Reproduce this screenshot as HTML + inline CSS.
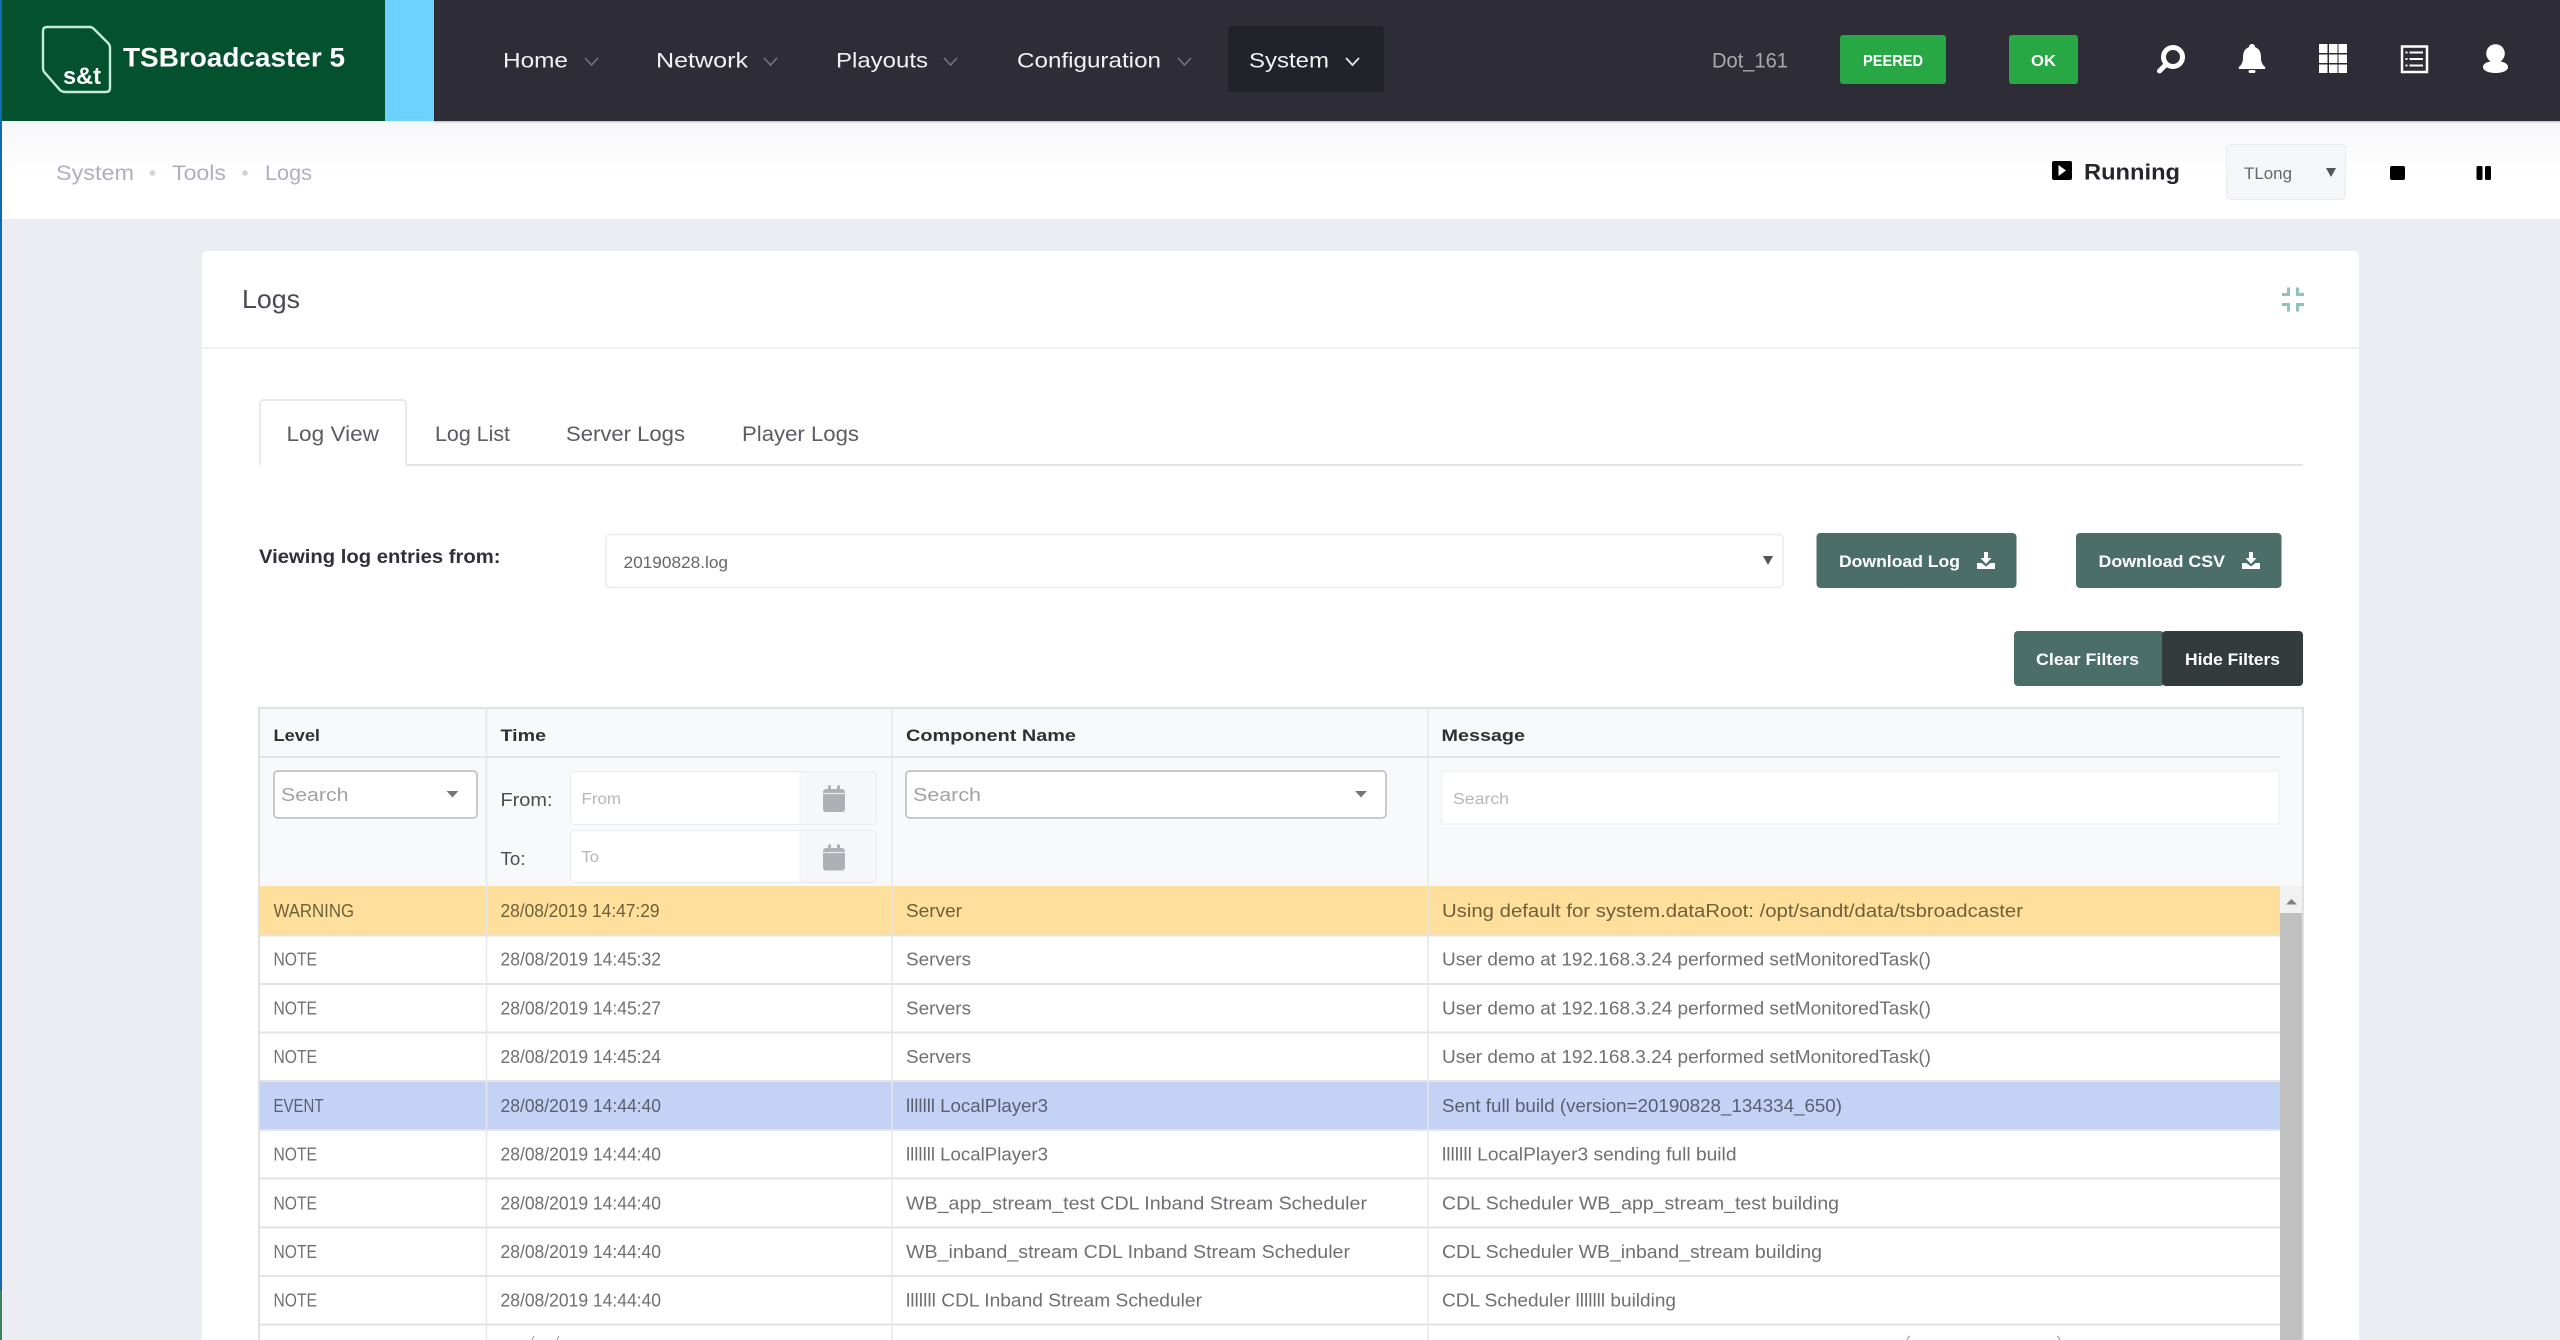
<!DOCTYPE html>
<html lang="en"><head><meta charset="utf-8"><title>Logs</title>
<style>
html,body{margin:0;padding:0;width:2560px;height:1340px;overflow:hidden;background:#ecedf3}
svg{display:block;position:absolute;left:0;top:0}
text{font-family:"Liberation Sans",sans-serif;white-space:pre}
.n{font-size:21px;fill:#f1f1f3}
.b{font-size:21px;fill:#b1afbc}
.t{font-size:21px;fill:#5b5b63}
.k{font-size:17px;font-weight:700;fill:#fff}
.h{font-size:17px;font-weight:700;fill:#2f3036}
.r{font-size:18px;fill:#707074}
.w{font-size:18px;fill:#6f6037}
.e{font-size:18px;fill:#5a5f70}
.f{font-size:18.5px;fill:#4c4c52}
.s{font-size:18.5px;fill:#a2a2a6}
.p{font-size:15.5px;fill:#b7b7bb}
</style></head><body>
<svg xmlns="http://www.w3.org/2000/svg" width="2560" height="1340" viewBox="0 0 2560 1340">
<defs><linearGradient id="g" x1="0" y1="0" x2="0" y2="1"><stop offset="0" stop-color="#f6f6f9"/><stop offset="0.55" stop-color="#fff"/></linearGradient></defs>
<rect width="2560" height="1340" fill="#ecedf3"/>
<!-- top bar -->
<rect width="2560" height="121" fill="#2e2d37"/>
<rect width="385" height="121" fill="#03512f"/>
<rect x="385" width="49" height="121" fill="#6dd2fd"/>
<path d="M47 27H90Q92 27 94 29L108 43Q110 45 110 48V88Q110 92 106 92H66Q62 92 60 90L45 73Q43 71 43 68V31Q43 27 47 27Z" fill="none" stroke="#c4ecd9" stroke-width="2.4"/>
<text x="63" y="84" font-size="24" font-weight="700" fill="#fff" textLength="38" lengthAdjust="spacingAndGlyphs">s&amp;t</text>
<text x="123" y="66.500" font-size="27" font-weight="700" fill="#fff" textLength="222" lengthAdjust="spacingAndGlyphs">TSBroadcaster 5</text>
<text class="n" x="503" y="67.500" textLength="65" lengthAdjust="spacingAndGlyphs">Home</text>
<path d="M585 58L591.500 65L598 58" fill="none" stroke="#77767f" stroke-width="1.500"/>
<text class="n" x="656" y="67.500" textLength="92" lengthAdjust="spacingAndGlyphs">Network</text>
<path d="M764 58L770.500 65L777 58" fill="none" stroke="#77767f" stroke-width="1.500"/>
<text class="n" x="836" y="67.500" textLength="92" lengthAdjust="spacingAndGlyphs">Playouts</text>
<path d="M944 58L950.500 65L957 58" fill="none" stroke="#77767f" stroke-width="1.500"/>
<text class="n" x="1017" y="67.500" textLength="144" lengthAdjust="spacingAndGlyphs">Configuration</text>
<path d="M1178 58L1184.500 65L1191 58" fill="none" stroke="#77767f" stroke-width="1.500"/>
<rect x="1228" y="26" width="156" height="66" rx="3" fill="#22222a"/>
<text class="n" x="1249" y="67.500" textLength="80" lengthAdjust="spacingAndGlyphs">System</text>
<path d="M1346 58L1352.500 65L1359 58" fill="none" stroke="#e5e5e8" stroke-width="1.800"/>
<text x="1712" y="67.500" font-size="21" fill="#a9a8ad" textLength="76" lengthAdjust="spacingAndGlyphs">Dot_161</text>
<rect x="1840" y="35" width="106" height="49" rx="3" fill="#28a745"/>
<text class="k" x="1863" y="66" textLength="60" lengthAdjust="spacingAndGlyphs" style="font-size:16px">PEERED</text>
<rect x="2009" y="35" width="69" height="49" rx="3" fill="#28a745"/>
<text class="k" x="2031" y="66" textLength="25" lengthAdjust="spacingAndGlyphs" style="font-size:16px">OK</text>
<!-- icons -->
<circle cx="2173" cy="57" r="9.500" fill="none" stroke="#fff" stroke-width="5"/>
<path d="M2165.500 65L2159.500 71" stroke="#fff" stroke-width="5" stroke-linecap="round"/>
<path d="M2252 44c2 0 3 1.500 3 3c5 2 6 6 6 11c0 5 2 7 4 9c1 1 0 2-1 2h-24c-1 0-2-1-1-2c2-2 4-4 4-9c0-5 1-9 6-11c0-1.500 1-3 3-3z" fill="#fff"/>
<rect x="2248.500" y="70" width="7" height="3" rx="1.500" fill="#fff"/>
<path fill="#fff" d="M2319 44h8.500v9h-8.500zM2329 44h8.500v9h-8.500zM2338.500 44h8.500v9h-8.500zM2319 54.500h8.500v8.500h-8.500zM2329 54.500h8.500v8.500h-8.500zM2338.500 54.500h8.500v8.500h-8.500zM2319 64.500h8.500v8.500h-8.500zM2329 64.500h8.500v8.500h-8.500zM2338.500 64.500h8.500v8.500h-8.500z"/>
<rect x="2402" y="46.500" width="25" height="25.500" fill="none" stroke="#fff" stroke-width="2.500"/>
<path d="M2409.500 52.500H2423M2409.500 59H2423M2409.500 65.500H2423M2405.500 52.500H2407.500M2405.500 59H2407.500M2405.500 65.500H2407.500" stroke="#fff" stroke-width="2"/>
<circle cx="2495.500" cy="53.500" r="9.300" fill="#fff"/>
<path d="M2483 67c0-4 6-6 12.500-6s12.500 2 12.500 6c0 4-6 6-12.500 6s-12.500-2-12.500-6z" fill="#fff"/>
<!-- subheader -->
<rect y="121" width="2560" height="98" fill="url(#g)"/>
<rect y="121" x="434" width="2126" height="1.500" fill="#c9c9d2"/>
<text class="b" x="56" y="180" textLength="78" lengthAdjust="spacingAndGlyphs">System</text>
<circle cx="152.500" cy="173" r="2.800" fill="#d4d3db"/>
<text class="b" x="172" y="180" textLength="54" lengthAdjust="spacingAndGlyphs">Tools</text>
<circle cx="245" cy="173" r="2.800" fill="#d4d3db"/>
<text class="b" x="265" y="180" textLength="47" lengthAdjust="spacingAndGlyphs">Logs</text>
<rect x="2052" y="161" width="20" height="19" rx="2" fill="#000"/>
<path d="M2058.500 165L2066 170.500L2058.500 176z" fill="#fff"/>
<text x="2084" y="179.500" font-size="22" font-weight="700" fill="#25252c" textLength="96" lengthAdjust="spacingAndGlyphs">Running</text>
<rect x="2226.500" y="144.500" width="119" height="55" rx="4" fill="#f5f6f8" stroke="#e9ebef"/>
<text x="2244" y="179" font-size="17" fill="#66666c" textLength="48" lengthAdjust="spacingAndGlyphs">TLong</text>
<path d="M2326 168H2336L2331 177z" fill="#555"/>
<rect x="2390" y="166" width="15" height="14" rx="2" fill="#000"/>
<rect x="2476.500" y="166" width="6" height="14" rx="1.500" fill="#000"/>
<rect x="2485" y="166" width="6" height="14" rx="1.500" fill="#000"/>
<!-- card -->
<path d="M202 1340V257Q202 251 208 251H2353Q2359 251 2359 257V1340z" fill="#fff"/>
<rect x="202" y="347" width="2157" height="2" fill="#eeeff3"/>
<text x="242" y="308" font-size="26" fill="#4a4a52" textLength="58" lengthAdjust="spacingAndGlyphs">Logs</text>
<path d="M2282 294.500H2288.500V287.500M2304 294.500H2297.500V287.500M2282 304.500H2288.500V311.500M2304 304.500H2297.500V311.500" fill="none" stroke="#8bc6b4" stroke-width="3"/>
<!-- tabs -->
<path d="M406 465H2303" stroke="#e3e4e8" stroke-width="2"/>
<path d="M260 465V404Q260 400 264 400H402Q406 400 406 404V465" fill="#fff" stroke="#e6e7eb" stroke-width="1.800"/>
<text class="t" x="286.500" y="441" textLength="92.500" lengthAdjust="spacingAndGlyphs">Log View</text>
<text class="t" x="435" y="441" textLength="75" lengthAdjust="spacingAndGlyphs">Log List</text>
<text class="t" x="566" y="441" textLength="119" lengthAdjust="spacingAndGlyphs">Server Logs</text>
<text class="t" x="742" y="441" textLength="117" lengthAdjust="spacingAndGlyphs">Player Logs</text>
<!-- file row -->
<text x="259" y="563" font-size="19.500" font-weight="700" fill="#2f3038" textLength="241.500" lengthAdjust="spacingAndGlyphs">Viewing log entries from:</text>
<rect x="606" y="534.500" width="1177" height="53" rx="4" fill="#fff" stroke="#e9eaee" stroke-width="1.500"/>
<text x="623.500" y="568" font-size="17" fill="#66666c" textLength="104.500" lengthAdjust="spacingAndGlyphs">20190828.log</text>
<path d="M1763 556H1773L1768 565z" fill="#555"/>
<rect x="1816.500" y="533" width="200" height="55" rx="4" fill="#4b6e69"/>
<text class="k" x="1839" y="567" textLength="121" lengthAdjust="spacingAndGlyphs">Download Log</text>
<path transform="translate(1977 552)" fill="#fff" d="M7 0h4v6h3.500L9 12 3.500 6H7zM0 11h4.500L9 14.500 13.500 11H18v6H0z"/>
<rect x="2076" y="533" width="205.500" height="55" rx="4" fill="#4b6e69"/>
<text class="k" x="2098.500" y="567" textLength="126.500" lengthAdjust="spacingAndGlyphs">Download CSV</text>
<path transform="translate(2242 552)" fill="#fff" d="M7 0h4v6h3.500L9 12 3.500 6H7zM0 11h4.500L9 14.500 13.500 11H18v6H0z"/>
<rect x="2014" y="631" width="150" height="55" rx="4" fill="#4b6e69"/>
<rect x="2162" y="631" width="141" height="55" rx="4" fill="#343b3c"/>
<text class="k" x="2036" y="665" textLength="103" lengthAdjust="spacingAndGlyphs">Clear Filters</text>
<text class="k" x="2185" y="665" textLength="95" lengthAdjust="spacingAndGlyphs">Hide Filters</text>
<!-- table head -->
<rect x="260" y="708" width="2043" height="178" fill="#f8f9fa"/>
<path d="M259 1340V708H2303V1340" fill="none" stroke="#e1e1e1" stroke-width="2"/>
<path d="M260 757H2280" stroke="#e4e4e6" stroke-width="2"/>
<text class="h" x="273.500" y="741" textLength="46.500" lengthAdjust="spacingAndGlyphs">Level</text>
<text class="h" x="500.500" y="741" textLength="45.500" lengthAdjust="spacingAndGlyphs">Time</text>
<text class="h" x="906" y="741" textLength="170" lengthAdjust="spacingAndGlyphs">Component Name</text>
<text class="h" x="1441.500" y="741" textLength="83.500" lengthAdjust="spacingAndGlyphs">Message</text>
<rect x="274" y="771" width="203" height="47" rx="4" fill="#fff" stroke="#c9c9cc" stroke-width="2"/>
<text class="s" x="281" y="801" textLength="67.500" lengthAdjust="spacingAndGlyphs">Search</text>
<path d="M446.500 791H458.500L452.500 797.500z" fill="#777"/>
<text class="f" x="500.500" y="806" textLength="52" lengthAdjust="spacingAndGlyphs">From:</text>
<rect x="570.500" y="771.500" width="306" height="53" rx="4" fill="#f6f7f8" stroke="#e9ebee"/>
<path d="M574.500 772H800V824H574.500Q571 824 571 820V776Q571 772 574.500 772z" fill="#fff"/>
<path d="M800 772V824" stroke="#eef0f2"/>
<text class="p" x="581.500" y="804" textLength="39.500" lengthAdjust="spacingAndGlyphs">From</text>
<g fill="#adb1b6"><rect x="823" y="789" width="22" height="23" rx="3"/><rect x="828" y="785.500" width="3" height="5"/><rect x="837" y="785.500" width="3" height="5"/></g>
<path d="M823 793.500H845" stroke="#e6e7e9" stroke-width="1.200"/>
<text class="f" x="500.500" y="865" textLength="25" lengthAdjust="spacingAndGlyphs">To:</text>
<rect x="570.500" y="830.500" width="306" height="52" rx="4" fill="#f6f7f8" stroke="#e9ebee"/>
<path d="M574.500 831H800V882H574.500Q571 882 571 878V835Q571 831 574.500 831z" fill="#fff"/>
<path d="M800 831V882" stroke="#eef0f2"/>
<text class="p" x="581.500" y="862" textLength="17.500" lengthAdjust="spacingAndGlyphs">To</text>
<g fill="#adb1b6"><rect x="823" y="848" width="22" height="22.500" rx="3"/><rect x="828" y="844.500" width="3" height="5"/><rect x="837" y="844.500" width="3" height="5"/></g>
<path d="M823 852.500H845" stroke="#e6e7e9" stroke-width="1.200"/>
<rect x="906" y="771" width="480" height="47" rx="4" fill="#fff" stroke="#c9c9cc" stroke-width="2"/>
<text class="s" x="913" y="801" textLength="68" lengthAdjust="spacingAndGlyphs">Search</text>
<path d="M1355 791H1367L1361 797.500z" fill="#777"/>
<rect x="1442" y="771" width="837" height="53" fill="#fff" stroke="#eef0f2"/>
<text class="p" x="1453" y="804" textLength="56" lengthAdjust="spacingAndGlyphs">Search</text>
<!-- rows bg -->
<rect x="260" y="886" width="2020" height="454" fill="#fff"/>
<rect x="260" y="886" width="2020" height="49" fill="#ffdf9c"/>
<rect x="260" y="1081" width="2020" height="49" fill="#c4d2f6"/>
<path d="M260 935.500H2280M260 984H2280M260 1032.500H2280M260 1081H2280M260 1130H2280M260 1178.500H2280M260 1227.500H2280M260 1276H2280M260 1324.500H2280" stroke="#e3e3e5" stroke-width="2"/>
<path d="M486.500 708V1340M892 708V1340M1428 708V1340" stroke="#e6e7ea" stroke-width="1.500"/>
<!-- scrollbar -->
<rect x="2280" y="886" width="22" height="454" fill="#f1f1f1"/>
<rect x="2280" y="913" width="22" height="427" fill="#c0c0c0"/>
<path d="M2286 904.500H2297L2291.500 899z" fill="#808080"/>
<!-- rows -->
<text class="w" x="273.500" y="917" textLength="80.500" lengthAdjust="spacingAndGlyphs">WARNING</text>
<text class="w" x="500.500" y="917" textLength="159" lengthAdjust="spacingAndGlyphs">28/08/2019 14:47:29</text>
<text class="w" x="906" y="917" textLength="56" lengthAdjust="spacingAndGlyphs">Server</text>
<text class="w" x="1442" y="917" textLength="581" lengthAdjust="spacingAndGlyphs">Using default for system.dataRoot: /opt/sandt/data/tsbroadcaster</text>

<text class="r" x="273.500" y="965.500" textLength="43.500" lengthAdjust="spacingAndGlyphs">NOTE</text>
<text class="r" x="500.500" y="965.500" textLength="160.500" lengthAdjust="spacingAndGlyphs">28/08/2019 14:45:32</text>
<text class="r" x="906" y="965.500" textLength="65" lengthAdjust="spacingAndGlyphs">Servers</text>
<text class="r" x="1442" y="965.500" textLength="489" lengthAdjust="spacingAndGlyphs">User demo at 192.168.3.24 performed setMonitoredTask()</text>

<text class="r" x="273.500" y="1014.500" textLength="43.500" lengthAdjust="spacingAndGlyphs">NOTE</text>
<text class="r" x="500.500" y="1014.500" textLength="160.500" lengthAdjust="spacingAndGlyphs">28/08/2019 14:45:27</text>
<text class="r" x="906" y="1014.500" textLength="65" lengthAdjust="spacingAndGlyphs">Servers</text>
<text class="r" x="1442" y="1014.500" textLength="489" lengthAdjust="spacingAndGlyphs">User demo at 192.168.3.24 performed setMonitoredTask()</text>

<text class="r" x="273.500" y="1063" textLength="43.500" lengthAdjust="spacingAndGlyphs">NOTE</text>
<text class="r" x="500.500" y="1063" textLength="160.500" lengthAdjust="spacingAndGlyphs">28/08/2019 14:45:24</text>
<text class="r" x="906" y="1063" textLength="65" lengthAdjust="spacingAndGlyphs">Servers</text>
<text class="r" x="1442" y="1063" textLength="489" lengthAdjust="spacingAndGlyphs">User demo at 192.168.3.24 performed setMonitoredTask()</text>

<text class="e" x="273.500" y="1112" textLength="50" lengthAdjust="spacingAndGlyphs">EVENT</text>
<text class="e" x="500.500" y="1112" textLength="160.500" lengthAdjust="spacingAndGlyphs">28/08/2019 14:44:40</text>
<text class="e" x="906" y="1112" textLength="142" lengthAdjust="spacingAndGlyphs">lllllll LocalPlayer3</text>
<text class="e" x="1442" y="1112" textLength="400" lengthAdjust="spacingAndGlyphs">Sent full build (version=20190828_134334_650)</text>

<text class="r" x="273.500" y="1160.500" textLength="43.500" lengthAdjust="spacingAndGlyphs">NOTE</text>
<text class="r" x="500.500" y="1160.500" textLength="160.500" lengthAdjust="spacingAndGlyphs">28/08/2019 14:44:40</text>
<text class="r" x="906" y="1160.500" textLength="142" lengthAdjust="spacingAndGlyphs">lllllll LocalPlayer3</text>
<text class="r" x="1442" y="1160.500" textLength="294.500" lengthAdjust="spacingAndGlyphs">lllllll LocalPlayer3 sending full build</text>

<text class="r" x="273.500" y="1209.500" textLength="43.500" lengthAdjust="spacingAndGlyphs">NOTE</text>
<text class="r" x="500.500" y="1209.500" textLength="160.500" lengthAdjust="spacingAndGlyphs">28/08/2019 14:44:40</text>
<text class="r" x="906" y="1209.500" textLength="461" lengthAdjust="spacingAndGlyphs">WB_app_stream_test CDL Inband Stream Scheduler</text>
<text class="r" x="1442" y="1209.500" textLength="397" lengthAdjust="spacingAndGlyphs">CDL Scheduler WB_app_stream_test building</text>

<text class="r" x="273.500" y="1258" textLength="43.500" lengthAdjust="spacingAndGlyphs">NOTE</text>
<text class="r" x="500.500" y="1258" textLength="160.500" lengthAdjust="spacingAndGlyphs">28/08/2019 14:44:40</text>
<text class="r" x="906" y="1258" textLength="444" lengthAdjust="spacingAndGlyphs">WB_inband_stream CDL Inband Stream Scheduler</text>
<text class="r" x="1442" y="1258" textLength="380" lengthAdjust="spacingAndGlyphs">CDL Scheduler WB_inband_stream building</text>

<text class="r" x="273.500" y="1306.500" textLength="43.500" lengthAdjust="spacingAndGlyphs">NOTE</text>
<text class="r" x="500.500" y="1306.500" textLength="160.500" lengthAdjust="spacingAndGlyphs">28/08/2019 14:44:40</text>
<text class="r" x="906" y="1306.500" textLength="296" lengthAdjust="spacingAndGlyphs">lllllll CDL Inband Stream Scheduler</text>
<text class="r" x="1442" y="1306.500" textLength="234" lengthAdjust="spacingAndGlyphs">CDL Scheduler lllllll building</text>

<!-- tops of the clipped next row -->
<path d="M532 1340L534 1336M557 1340L559 1336M1907 1340Q1908 1337 1910 1336M2057 1336Q2059 1337 2060 1340" fill="none" stroke="#9a9a9e" stroke-width="1"/>
<!-- left strip -->
<rect width="2" height="1340" fill="#0f6bb2"/>
<rect y="1290" width="2" height="50" fill="#3e7f5c"/>
</svg>
</body></html>
